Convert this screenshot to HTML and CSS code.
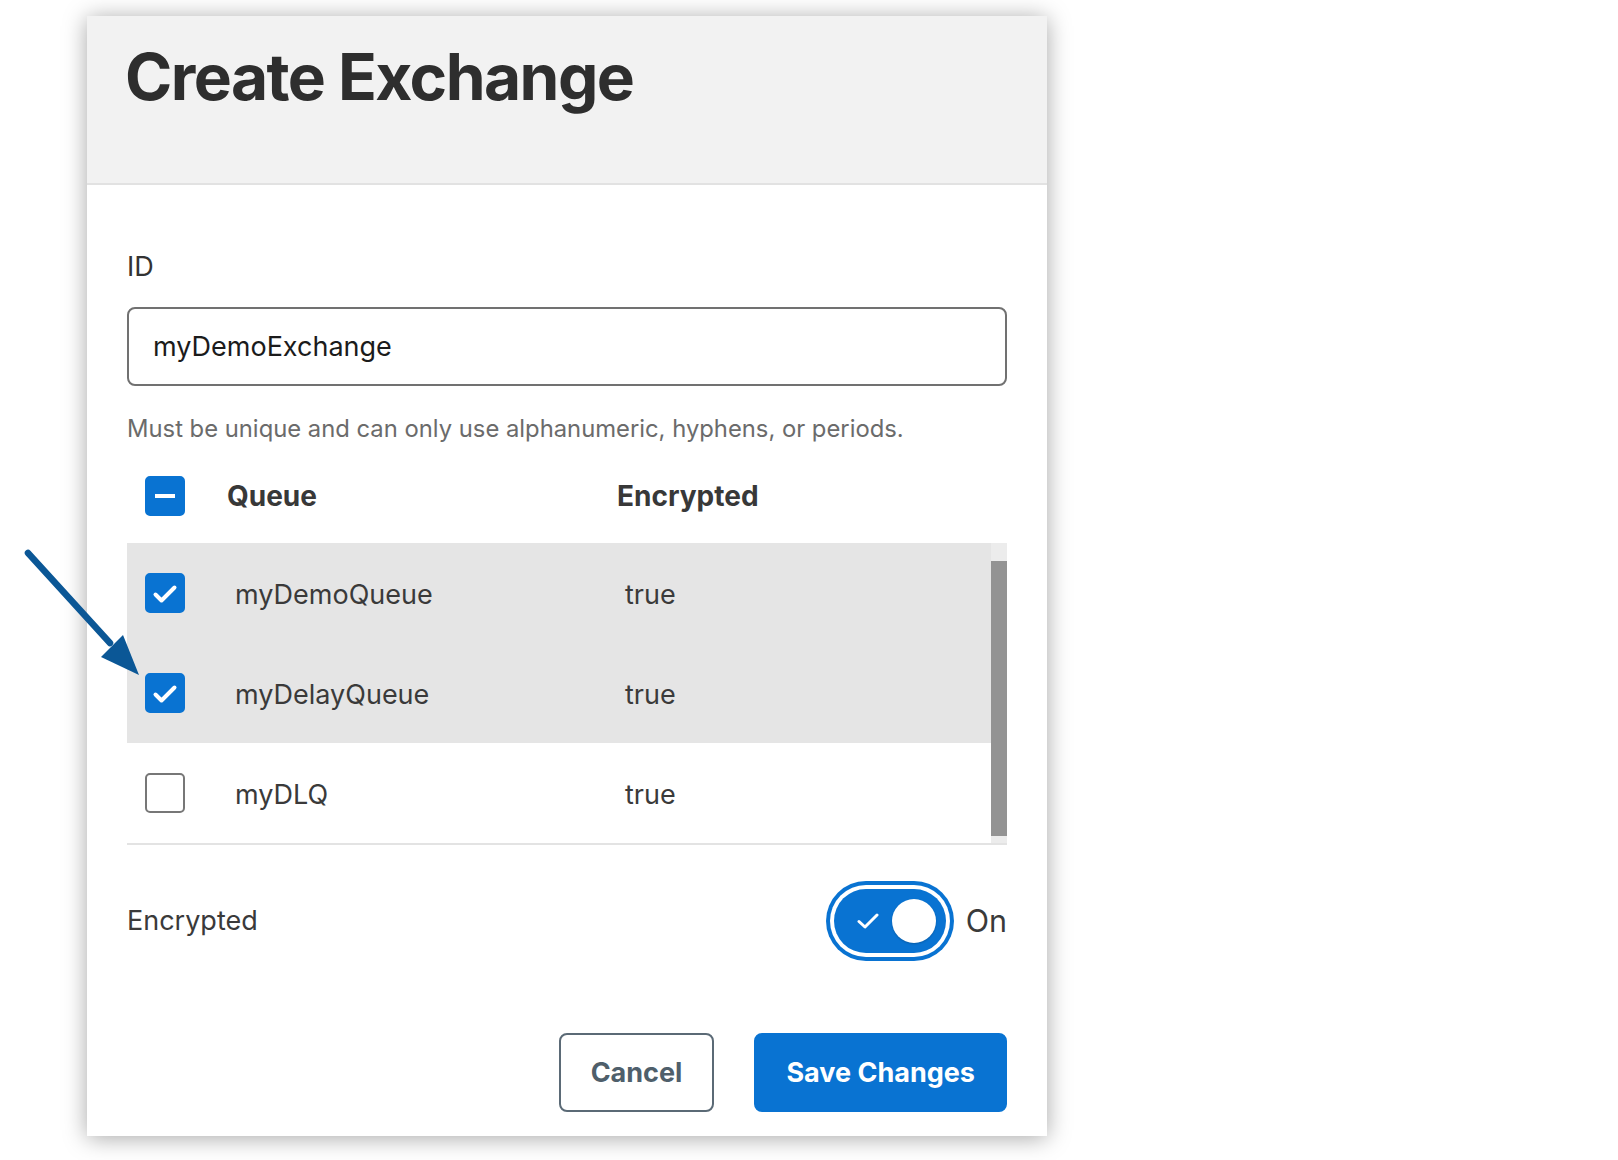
FILE: index.html
```html
<!DOCTYPE html>
<html lang="en">
<head>
<meta charset="utf-8">
<title>Create Exchange</title>
<link rel="stylesheet" href="styles.css">
</head>
<body>
<div class="dialog">
  <div class="dialog-header">
    <h1 class="title">Create Exchange</h1>
  </div>
  <div class="dialog-body">
    <label class="field-label" for="exchange-id">ID</label>
    <input class="text-input" id="exchange-id" type="text" value="myDemoExchange">
    <p class="hint">Must be unique and can only use alphanumeric, hyphens, or periods.</p>

    <div class="table">
      <div class="thead">
        <div class="cell-check"><span class="checkbox checked"><span class="dash"></span></span></div>
        <div class="th">Queue</div>
        <div class="th">Encrypted</div>
      </div>
      <div class="tbody-wrap">
        <div class="tbody">
          <div class="row selected">
            <div class="cell-check"><span class="checkbox checked"><svg class="tick" viewBox="0 0 40 40"><path d="M10.5 21.5 L16.5 27.5 L29.5 14.5"/></svg></span></div>
            <div class="td">myDemoQueue</div>
            <div class="td">true</div>
          </div>
          <div class="row selected">
            <div class="cell-check"><span class="checkbox checked"><svg class="tick" viewBox="0 0 40 40"><path d="M10.5 21.5 L16.5 27.5 L29.5 14.5"/></svg></span></div>
            <div class="td">myDelayQueue</div>
            <div class="td">true</div>
          </div>
          <div class="row">
            <div class="cell-check"><span class="checkbox"></span></div>
            <div class="td">myDLQ</div>
            <div class="td">true</div>
          </div>
        </div>
        <div class="scrollbar"><div class="thumb"></div></div>
      </div>
    </div>

    <div class="toggle-row">
      <span class="toggle-label">Encrypted</span>
      <div class="switch-wrap">
        <span class="switch">
          <svg class="switch-tick" viewBox="0 0 22 16"><path d="M2 8.5 L8 14 L20 2"/></svg>
          <span class="knob"></span>
        </span>
        <span class="switch-state">On</span>
      </div>
    </div>

    <div class="actions">
      <button class="btn btn-secondary" type="button">Cancel</button>
      <button class="btn btn-primary" type="button">Save Changes</button>
    </div>
  </div>
</div>

<svg class="callout-arrow" viewBox="0 520 160 170" aria-hidden="true">
  <line x1="28" y1="553" x2="110" y2="643" />
  <polygon points="139,675 101,657 123,635" />
</svg>
</body>
</html>
```

FILE: styles.css
```css
html, body {
  margin: 0;
  background: #ffffff;
}

body {
  position: relative;
  min-height: 1160px;
  font-family: Inter, "Noto Sans", "Liberation Sans", sans-serif;
  color: #333333;
}

.dialog {
  width: 960px;
  margin: 16px 0 0 87px;
  background: #ffffff;
  box-shadow: 0 2px 22px rgba(0, 0, 0, 0.35);
}

.dialog-header {
  height: 142px;
  padding: 25px 40px 0 38px;
  background: #f2f2f2;
  border-bottom: 2px solid #e2e2e2;
}

.title {
  margin: 0;
  font-size: 64px;
  line-height: 72px;
  font-weight: 700;
  letter-spacing: -1.55px;
  color: #2e2e2e;
}

.dialog-body {
  padding: 64px 40px 24px;
}

.field-label {
  display: block;
  font-size: 27px;
  line-height: 36px;
  color: #333333;
}

.text-input {
  display: block;
  width: 100%;
  height: 79px;
  margin: 22px 0 0;
  padding: 0 24px;
  box-sizing: border-box;
  border: 2px solid #717171;
  border-radius: 8px;
  font-family: Inter, "Noto Sans", "Liberation Sans", sans-serif;
  font-size: 27px;
  color: #1b1b1b;
  background: #ffffff;
  outline: none;
}

.hint {
  margin: 27px 0 4px;
  font-size: 23.8px;
  line-height: 32px;
  color: #6b6b6b;
}

.thead,
.row {
  display: grid;
  grid-template-columns: 100px 390px 1fr;
  align-items: center;
}

.thead {
  height: 94px;
}

.th {
  font-size: 28px;
  line-height: 36px;
  font-weight: 700;
  color: #383838;
}

.cell-check {
  display: flex;
  align-items: center;
  padding-left: 18px;
}

.checkbox {
  display: flex;
  align-items: center;
  justify-content: center;
  width: 40px;
  height: 40px;
  box-sizing: border-box;
  border: 2px solid #777777;
  border-radius: 5px;
  background: #ffffff;
}

.checkbox.checked {
  border-color: #0973d2;
  background: #0973d2;
}

.dash {
  width: 20px;
  height: 4px;
  background: #ffffff;
}

.tick {
  width: 40px;
  height: 40px;
  flex: none;
  margin: -2px;
}

.tick path {
  fill: none;
  stroke: #ffffff;
  stroke-width: 4;
  stroke-linecap: round;
  stroke-linejoin: round;
}

.tbody-wrap {
  display: grid;
  grid-template-columns: 1fr 16px;
  border-bottom: 2px solid #e3e3e3;
}

.row {
  height: 100px;
}

.row.selected {
  background: #e5e5e5;
}

.td {
  padding: 3px 0 0 8px;
  font-size: 27px;
  line-height: 36px;
  color: #3a3a3a;
}

.scrollbar {
  padding: 18px 0 7px;
  background: #ececec;
}

.thumb {
  height: 100%;
  background: #939393;
}

.toggle-row {
  display: flex;
  align-items: center;
  justify-content: space-between;
  height: 80px;
  margin-top: 36px;
}

.toggle-label {
  font-size: 27px;
  line-height: 36px;
  color: #3a3a3a;
}

.switch-wrap {
  display: flex;
  align-items: center;
  gap: 12px;
}

.switch {
  display: flex;
  align-items: center;
  justify-content: space-between;
  width: 112px;
  height: 64px;
  margin: 8px;
  padding: 0 10px 0 23px;
  box-sizing: border-box;
  border-radius: 32px;
  background: #0973d2;
  box-shadow: 0 0 0 4px #ffffff, 0 0 0 8px #0973d2;
}

.switch-tick {
  width: 22px;
  height: 16px;
}

.switch-tick path {
  fill: none;
  stroke: #ffffff;
  stroke-width: 3;
  stroke-linecap: round;
  stroke-linejoin: round;
}

.knob {
  width: 44px;
  height: 44px;
  border-radius: 50%;
  background: #ffffff;
  box-shadow: 0 1px 2px rgba(0, 0, 0, 0.2);
}

.switch-state {
  font-size: 30.5px;
  line-height: 36px;
  color: #3a3a3a;
}

.actions {
  display: flex;
  justify-content: flex-end;
  gap: 40px;
  margin-top: 72px;
}

.btn {
  height: 79px;
  padding: 0 30px;
  box-sizing: border-box;
  border-radius: 8px;
  font-family: Inter, "Noto Sans", "Liberation Sans", sans-serif;
  font-size: 27px;
  font-weight: 700;
  cursor: pointer;
}

.btn-secondary {
  border: 2px solid #5b6a76;
  background: #ffffff;
  color: #4f5f6b;
}

.btn-primary {
  border: 2px solid #0973d2;
  background: #0973d2;
  color: #ffffff;
}

.callout-arrow {
  position: absolute;
  left: 0;
  top: 520px;
  width: 160px;
  height: 170px;
}

.callout-arrow line {
  stroke: #0b5796;
  stroke-width: 6.5;
  stroke-linecap: round;
}

.callout-arrow polygon {
  fill: #0b5796;
}
```
